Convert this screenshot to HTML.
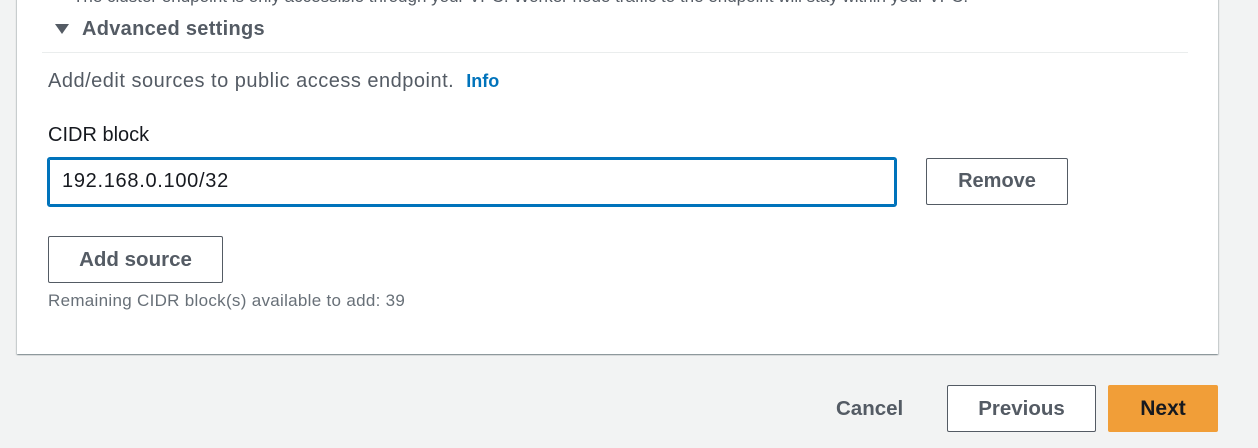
<!DOCTYPE html>
<html><head><style>
*{margin:0;padding:0;box-sizing:border-box}
body{width:1258px;height:448px;background:#f2f3f3;font-family:"Liberation Sans",Arial,sans-serif;position:relative;overflow:hidden;color:#16191f}
.panel{position:absolute;left:17px;top:-10px;width:1201px;height:364px;background:#fff;box-shadow:0 1px 1px 0 rgba(0,28,36,.3),1px 1px 1px 0 rgba(0,28,36,.15),-1px 1px 1px 0 rgba(0,28,36,.15)}
.a{position:absolute;white-space:nowrap}
.btn{position:absolute;border:1px solid #545b64;border-radius:2px;background:#fff;font-weight:bold;color:#545b64;font-size:20px;display:flex;align-items:center;justify-content:center}
</style></head><body>
<div class="panel"></div>
<div class="a" style="left:73px;top:-13px;font-size:17px;color:#545b64">The cluster endpoint is only accessible through your VPC. Worker node traffic to the endpoint will stay within your VPC.</div>
<div class="a" style="left:55px;top:24px;width:0;height:0;border-left:7px solid transparent;border-right:7px solid transparent;border-top:10px solid #545b64"></div>
<div class="a" style="left:82px;top:18px;font-size:20px;font-weight:bold;color:#545b64;letter-spacing:0.3px">Advanced settings</div>
<div class="a" style="left:42px;top:52px;width:1146px;height:1px;background:#eaeded"></div>
<div class="a" style="left:48px;top:70px;font-size:20px;color:#545b64;letter-spacing:0.5px">Add/edit sources to public access endpoint. <span style="color:#0073bb;font-weight:bold;font-size:18px;margin-left:6px;letter-spacing:0">Info</span></div>
<div class="a" style="left:48px;top:124px;font-size:20px;color:#16191f">CIDR block</div>
<div class="a" style="left:47px;top:157px;width:850px;height:50px;border:2px solid #0073bb;border-radius:3px;box-shadow:0 0 0 1px #0073bb inset"></div>
<div class="a" style="left:62px;top:170px;font-size:20px;color:#16191f;letter-spacing:0.7px">192.168.0.100/32</div>
<div class="btn" style="left:926px;top:158px;width:142px;height:47px">Remove</div>
<div class="btn" style="left:48px;top:236px;width:175px;height:47px;font-size:20.5px">Add source</div>
<div class="a" style="left:48px;top:291px;font-size:17px;color:#687078;letter-spacing:0.3px">Remaining CIDR block(s) available to add: 39</div>
<div class="a" style="left:836px;top:397px;font-size:20.5px;font-weight:bold;color:#545b64">Cancel</div>
<div class="btn" style="left:947px;top:385px;width:149px;height:47px;font-size:20.5px">Previous</div>
<div class="btn" style="left:1108px;top:385px;width:110px;height:47px;font-size:21px;background:#f19e38;border-color:#f19e38;color:#16191f">Next</div>
</body></html>
